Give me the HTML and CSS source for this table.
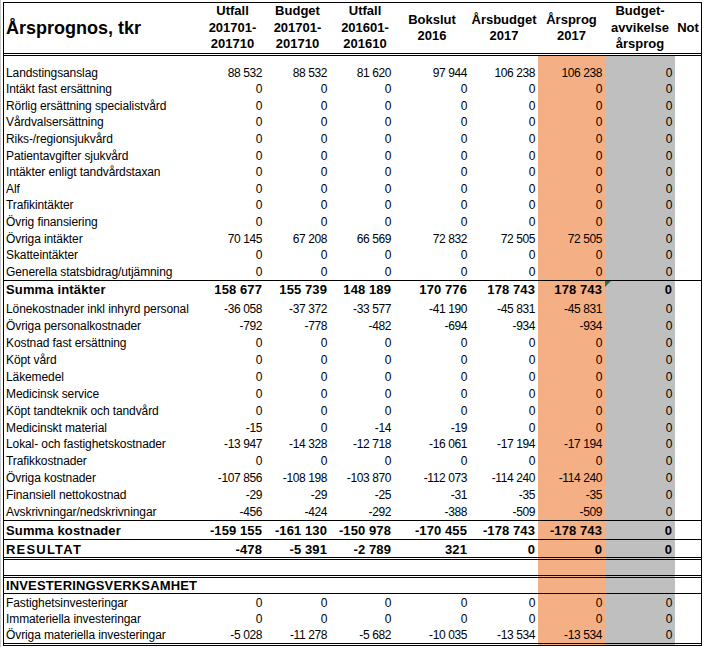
FILE: index.html
```html
<!DOCTYPE html>
<html lang="sv">
<head>
<meta charset="utf-8">
<title>Årsprognos, tkr</title>
<link rel="stylesheet" href="styles.css">
</head>
<body>
<div class="sheet">
<table class="report">
<colgroup>
<col class="c-label"><col class="c-a"><col class="c-b"><col class="c-c"><col class="c-d"><col class="c-e"><col class="c-f"><col class="c-g"><col class="c-h">
</colgroup>
<thead>
<tr class="r-head">
<th class="title">Årsprognos, tkr</th>
<th>Utfall<br>201701-<br>201710</th>
<th>Budget<br>201701-<br>201710</th>
<th class="shift">Utfall<br>201601-<br>201610</th>
<th>Bokslut<br>2016</th>
<th>Årsbudget<br>2017</th>
<th>Årsprog<br>2017</th>
<th>Budget-<br>avvikelse<br>årsprog</th>
<th>Not</th>
</tr>
</thead>
<tbody>
<tr class="r-first"><td>Landstingsanslag</td><td class="n">88 532</td><td class="n">88 532</td><td class="n">81 620</td><td class="n">97 944</td><td class="n">106 238</td><td class="n o">106 238</td><td class="n g">0</td><td></td></tr>
<tr class="r-a"><td>Intäkt fast ersättning</td><td class="n">0</td><td class="n">0</td><td class="n">0</td><td class="n">0</td><td class="n">0</td><td class="n o">0</td><td class="n g">0</td><td></td></tr>
<tr class="r-a"><td>Rörlig ersättning specialistvård</td><td class="n">0</td><td class="n">0</td><td class="n">0</td><td class="n">0</td><td class="n">0</td><td class="n o">0</td><td class="n g">0</td><td></td></tr>
<tr class="r-a"><td>Vårdvalsersättning</td><td class="n">0</td><td class="n">0</td><td class="n">0</td><td class="n">0</td><td class="n">0</td><td class="n o">0</td><td class="n g">0</td><td></td></tr>
<tr class="r-a"><td>Riks-/regionsjukvård</td><td class="n">0</td><td class="n">0</td><td class="n">0</td><td class="n">0</td><td class="n">0</td><td class="n o">0</td><td class="n g">0</td><td></td></tr>
<tr class="r-a"><td>Patientavgifter sjukvård</td><td class="n">0</td><td class="n">0</td><td class="n">0</td><td class="n">0</td><td class="n">0</td><td class="n o">0</td><td class="n g">0</td><td></td></tr>
<tr class="r-a"><td>Intäkter enligt tandvårdstaxan</td><td class="n">0</td><td class="n">0</td><td class="n">0</td><td class="n">0</td><td class="n">0</td><td class="n o">0</td><td class="n g">0</td><td></td></tr>
<tr class="r-a"><td>Alf</td><td class="n">0</td><td class="n">0</td><td class="n">0</td><td class="n">0</td><td class="n">0</td><td class="n o">0</td><td class="n g">0</td><td></td></tr>
<tr class="r-a"><td>Trafikintäkter</td><td class="n">0</td><td class="n">0</td><td class="n">0</td><td class="n">0</td><td class="n">0</td><td class="n o">0</td><td class="n g">0</td><td></td></tr>
<tr class="r-a"><td>Övrig finansiering</td><td class="n">0</td><td class="n">0</td><td class="n">0</td><td class="n">0</td><td class="n">0</td><td class="n o">0</td><td class="n g">0</td><td></td></tr>
<tr class="r-a"><td>Övriga intäkter</td><td class="n">70 145</td><td class="n">67 208</td><td class="n">66 569</td><td class="n">72 832</td><td class="n">72 505</td><td class="n o">72 505</td><td class="n g">0</td><td></td></tr>
<tr class="r-a"><td>Skatteintäkter</td><td class="n">0</td><td class="n">0</td><td class="n">0</td><td class="n">0</td><td class="n">0</td><td class="n o">0</td><td class="n g">0</td><td></td></tr>
<tr class="r-a"><td>Generella statsbidrag/utjämning</td><td class="n">0</td><td class="n">0</td><td class="n">0</td><td class="n">0</td><td class="n">0</td><td class="n o">0</td><td class="n g">0</td><td></td></tr>
<tr class="r-sum1 sum"><td>Summa intäkter</td><td class="n">158 677</td><td class="n">155 739</td><td class="n">148 189</td><td class="n">170 776</td><td class="n">178 743</td><td class="n o">178 743</td><td class="n g flag">0</td><td></td></tr>
<tr class="r-cost1"><td>Lönekostnader inkl inhyrd personal</td><td class="n">-36 058</td><td class="n">-37 372</td><td class="n">-33 577</td><td class="n">-41 190</td><td class="n">-45 831</td><td class="n o">-45 831</td><td class="n g">0</td><td></td></tr>
<tr class="r-b"><td>Övriga personalkostnader</td><td class="n">-792</td><td class="n">-778</td><td class="n">-482</td><td class="n">-694</td><td class="n">-934</td><td class="n o">-934</td><td class="n g">0</td><td></td></tr>
<tr class="r-b"><td>Kostnad fast ersättning</td><td class="n">0</td><td class="n">0</td><td class="n">0</td><td class="n">0</td><td class="n">0</td><td class="n o">0</td><td class="n g">0</td><td></td></tr>
<tr class="r-b"><td>Köpt vård</td><td class="n">0</td><td class="n">0</td><td class="n">0</td><td class="n">0</td><td class="n">0</td><td class="n o">0</td><td class="n g">0</td><td></td></tr>
<tr class="r-b"><td>Läkemedel</td><td class="n">0</td><td class="n">0</td><td class="n">0</td><td class="n">0</td><td class="n">0</td><td class="n o">0</td><td class="n g">0</td><td></td></tr>
<tr class="r-b"><td>Medicinsk service</td><td class="n">0</td><td class="n">0</td><td class="n">0</td><td class="n">0</td><td class="n">0</td><td class="n o">0</td><td class="n g">0</td><td></td></tr>
<tr class="r-b"><td>Köpt tandteknik och tandvård</td><td class="n">0</td><td class="n">0</td><td class="n">0</td><td class="n">0</td><td class="n">0</td><td class="n o">0</td><td class="n g">0</td><td></td></tr>
<tr class="r-b"><td>Medicinskt material</td><td class="n">-15</td><td class="n">0</td><td class="n">-14</td><td class="n">-19</td><td class="n">0</td><td class="n o">0</td><td class="n g">0</td><td></td></tr>
<tr class="r-b"><td>Lokal- och fastighetskostnader</td><td class="n">-13 947</td><td class="n">-14 328</td><td class="n">-12 718</td><td class="n">-16 061</td><td class="n">-17 194</td><td class="n o">-17 194</td><td class="n g">0</td><td></td></tr>
<tr class="r-b"><td>Trafikkostnader</td><td class="n">0</td><td class="n">0</td><td class="n">0</td><td class="n">0</td><td class="n">0</td><td class="n o">0</td><td class="n g">0</td><td></td></tr>
<tr class="r-b"><td>Övriga kostnader</td><td class="n">-107 856</td><td class="n">-108 198</td><td class="n">-103 870</td><td class="n">-112 073</td><td class="n">-114 240</td><td class="n o">-114 240</td><td class="n g">0</td><td></td></tr>
<tr class="r-b"><td>Finansiell nettokostnad</td><td class="n">-29</td><td class="n">-29</td><td class="n">-25</td><td class="n">-31</td><td class="n">-35</td><td class="n o">-35</td><td class="n g">0</td><td></td></tr>
<tr class="r-b"><td>Avskrivningar/nedskrivningar</td><td class="n">-456</td><td class="n">-424</td><td class="n">-292</td><td class="n">-388</td><td class="n">-509</td><td class="n o">-509</td><td class="n g">0</td><td></td></tr>
<tr class="r-sum2 sum"><td>Summa kostnader</td><td class="n">-159 155</td><td class="n">-161 130</td><td class="n">-150 978</td><td class="n">-170 455</td><td class="n">-178 743</td><td class="n o">-178 743</td><td class="n g">0</td><td></td></tr>
<tr class="r-res sum"><td class="wide">RESULTAT</td><td class="n">-478</td><td class="n">-5 391</td><td class="n">-2 789</td><td class="n">321</td><td class="n">0</td><td class="n o">0</td><td class="n g">0</td><td></td></tr>
<tr class="r-empty"><td></td><td></td><td></td><td></td><td></td><td></td><td class="o"></td><td class="g"></td><td></td></tr>
<tr class="r-inv sum"><td>INVESTERINGSVERKSAMHET</td><td></td><td></td><td></td><td></td><td></td><td class="o"></td><td class="g"></td><td></td></tr>
<tr class="r-i1"><td>Fastighetsinvesteringar</td><td class="n">0</td><td class="n">0</td><td class="n">0</td><td class="n">0</td><td class="n">0</td><td class="n o">0</td><td class="n g">0</td><td></td></tr>
<tr class="r-i2"><td>Immateriella investeringar</td><td class="n">0</td><td class="n">0</td><td class="n">0</td><td class="n">0</td><td class="n">0</td><td class="n o">0</td><td class="n g">0</td><td></td></tr>
<tr class="r-i3"><td>Övriga materiella investeringar</td><td class="n">-5 028</td><td class="n">-11 278</td><td class="n">-5 682</td><td class="n">-10 035</td><td class="n">-13 534</td><td class="n o">-13 534</td><td class="n g">0</td><td></td></tr>
</tbody>
</table>
</div>
</body>
</html>
```

FILE: styles.css
```css
html, body {
  margin: 0;
  padding: 0;
  background: #ffffff;
}

body {
  font-family: "Liberation Sans", Arial, sans-serif;
  color: #000;
}

.sheet {
  box-sizing: border-box;
  min-height: 647px;
  border-left: 1px solid #c8c8c8;
  padding: 2px 0 0 2px;
}

.report {
  border-collapse: separate;
  border-spacing: 0;
  table-layout: fixed;
  width: 699px;
  border: 1px solid #000;
  border-bottom: none;
}

.c-label { width: 196px; }
.c-a { width: 65px; }
.c-b { width: 65px; }
.c-c { width: 64px; }
.c-d { width: 76px; }
.c-e { width: 68px; }
.c-f { width: 67px; }
.c-g { width: 70px; }
.c-h { width: 26px; }

th {
  font-size: 13px;
  font-weight: bold;
  line-height: 16.5px;
  text-align: center;
  vertical-align: middle;
  padding: 0;
  border-bottom: 3px double #000;
  white-space: nowrap;
}

th.shift {
  padding-left: 6px;
}

th.title {
  font-size: 18px;
  text-align: left;
  padding-left: 2px;
}

td {
  font-size: 12px;
  line-height: 15px;
  padding: 0 3px 0 2px;
  vertical-align: bottom;
  white-space: nowrap;
  overflow: hidden;
  letter-spacing: -0.1px;
}

td.n {
  text-align: right;
  letter-spacing: -0.4px;
}

td.o { background: #f4b084; }
td.g { background: #bfbfbf; }

.sum td {
  font-size: 13px;
  font-weight: bold;
  letter-spacing: 0.15px;
}

.sum td.n {
  letter-spacing: 0.1px;
}

.sum td.wide {
  letter-spacing: 1.2px;
}

.r-head { height: 53px; }
.r-first { height: 24.5px; }
.r-a { height: 16.62px; }
.r-sum1 { height: 17px; }
.r-sum1 td { border-top: 1px solid #000; }
.r-cost1 { height: 20.6px; }
.r-b { height: 16.875px; }
.r-sum2 { height: 20px; }
.r-sum2 td {
  border-top: 1px solid #000;
  border-bottom: 1px solid #000;
  padding-bottom: 1px;
}
.r-res { height: 20px; }
.r-res td { border-bottom: 3px double #000; }
.r-empty { height: 18px; }
.r-empty td { border-bottom: 3px double #000; }
.r-inv { height: 16px; }
.r-inv td { border-bottom: 1px solid #000; }
.r-i1 { height: 17px; }
.r-i2 { height: 16.5px; }
.r-i3 { height: 19px; }
.r-i3 td { border-bottom: 3px double #000; }

td.flag {
  position: relative;
}

td.flag::before {
  content: "";
  position: absolute;
  left: 0;
  top: 0;
  width: 0;
  height: 0;
  border-top: 6px solid #1e7a36;
  border-right: 6px solid transparent;
}
```
